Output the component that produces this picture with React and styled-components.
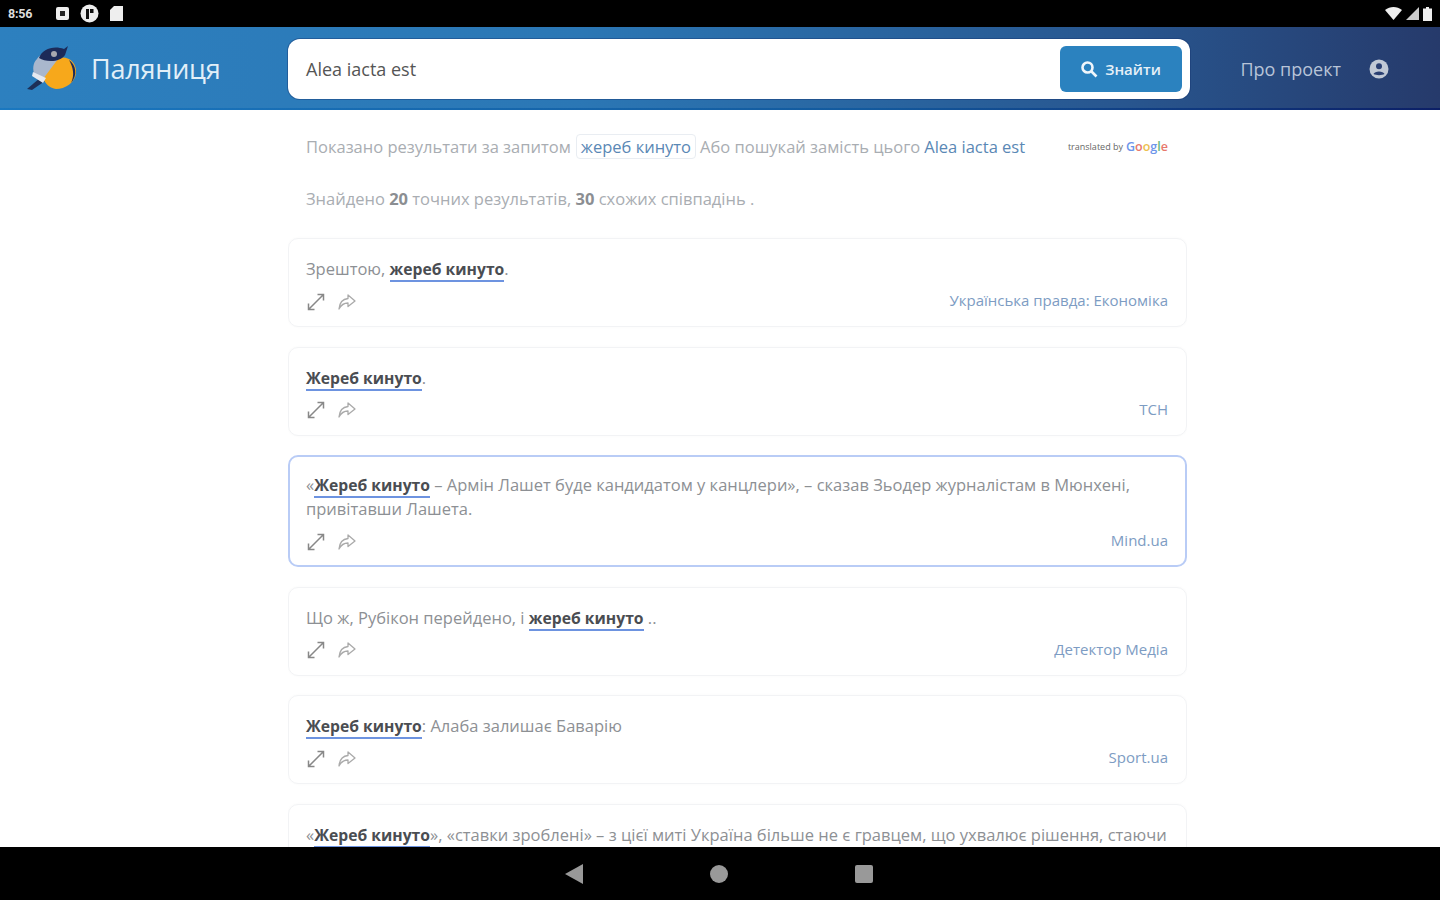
import React from "react";
import styled, { createGlobalStyle } from "styled-components";

const Global = createGlobalStyle`
  html, body { margin: 0; padding: 0; background: #fff; overflow: hidden; }
  body { font-family: "Open Sans", "Noto Sans", sans-serif; }
  * { box-sizing: border-box; }
`;

const Screen = styled.div`
  width: 1440px; height: 900px; display: flex; flex-direction: column; overflow: hidden; background: #fff;
`;
const StatusBar = styled.div`
  height: 27px; flex: none; background: #000; display: flex; align-items: center; justify-content: space-between;
  padding: 0 8px 0 8px; color: #e8e8e8;
`;
const StatusGroup = styled.div`
  display: flex; align-items: center; gap: ${p => p.$gap || 8}px;
`;
const Clock = styled.span`
  font: 700 12.5px "Roboto", sans-serif; width: 37px; color: #ddd; letter-spacing: -.2px;
`;
const Header = styled.header`
  height: 83px; flex: none; display: flex; align-items: center; padding: 3px 51px 0 26px;
  background: linear-gradient(90deg, #2d80bf 0%, #2b77b5 40%, #28568f 78%, #263a6b 100%);
  border-bottom: 2px solid;
  border-image: linear-gradient(90deg, #1a78c0 0%, #135a9e 60%, #0c1f66 100%) 1;
`;
const Brand = styled.div`
  width: 262px; display: flex; align-items: center; gap: 13px; padding-bottom: 2px;
`;
const BrandName = styled.span`
  font: 400 27px "Open Sans", sans-serif; color: #e2eff8; letter-spacing: -.2px;
`;
const SearchBox = styled.div`
  width: 902px; height: 60px; background: #fff; border-radius: 12px; display: flex; align-items: center;
  justify-content: space-between; padding: 0 8px 0 18px; box-shadow: 0 0 0 1px rgba(20,50,110,.4);
`;
const Query = styled.span`
  font-size: 18px; color: #555;
`;
const FindButton = styled.div`
  width: 122px; height: 46px; border-radius: 6px; background: #2b82bf; color: #e6f0f7; display: flex; align-items: center;
  justify-content: center; gap: 7px; font-size: 15px; font-weight: 600; padding-right: 1px;
`;
const HeaderNav = styled.nav`
  margin-left: auto; display: flex; align-items: center; gap: 28px; color: #b8c4d8; font-size: 18px;
`;
const Content = styled.main`
  flex: 1; min-height: 0; overflow: hidden; width: 899px; margin-left: 288px; display: flex; flex-direction: column;
`;
const Info = styled.div`
  height: 52px; flex: none; padding: 0 19px 0 18px; display: flex; align-items: center; font-size: 16.5px; color: #a9adb2; white-space: nowrap;
  ${p => p.$first && "margin-top: 10px;"}
  b { color: #8b8e92; font-weight: 700; }
`;
const QueryTag = styled.span`
  border: 1px solid #e9edf2; border-radius: 4px; color: #5a88b5; padding: 0 4px; margin: 0 4px 0 5px;
`;
const AltLink = styled.span`
  color: #5a88b5; margin-left: 4px;
`;
const Credit = styled.span`
  margin-left: auto; display: flex; align-items: center; gap: 3px; font-size: 9px; color: #666;
`;
const GoogleName = styled.span`
  font-size: 12.5px; font-weight: 600; span:nth-child(1),span:nth-child(4){color:#6d95ea} span:nth-child(2),span:nth-child(6){color:#e7786c} span:nth-child(3){color:#ecc04f} span:nth-child(5){color:#6cb97f}
`;
const Results = styled.div`
  margin-top: 14px; display: flex; flex-direction: column; gap: 19.5px;
`;
const Card = styled.article`
  border: ${p => p.$active ? "2px solid #b9ccf6" : "1px solid #f2f3f5"};
  border-radius: 10px; padding: ${p => p.$active ? "16px 17px 7px 16px" : "18px 18px 8px 17px"};
  box-shadow: ${p => p.$active ? "none" : "0 0 3px rgba(0,0,0,.03)"}; flex: none;
`;
const Sentence = styled.p`
  margin: 0; font-size: 16.5px; line-height: 24px; color: #8d9094; white-space: pre-line; height: ${p => p.$lines * 24}px;
  ${p => p.$clip && "white-space: nowrap; overflow: hidden;"}
`;
const Mark = styled.span`
  color: #4a4d52; font-size: 15.7px; font-weight: 700; border-bottom: 2px solid #6d93e0;
`;
const Foot = styled.div`
  display: flex; justify-content: space-between; align-items: center; height: 33px; margin-top: 4px;
`;
const Actions = styled.div`
  display: flex; gap: 11px; align-items: center; color: #888;
`;
const Source = styled.span`
  font-size: 15px; color: #7d9cc3; padding-bottom: 3px;
`;
const NavBar = styled.div`
  height: 53px; flex: none; background: #000; display: flex; align-items: center; justify-content: center; gap: 127px; padding-right: 2px;
`;

const Bird = () => (
  <svg width="52" height="46" viewBox="0 0 52 46">
    <path d="M1 44 L14 33 L19 36 L6 45 Z" fill="#1d2f57" />
    <path d="M30 14 C41 9 51 17 50 28 C49 38 39 44 30 44 C24 43 19 39 17 33 Z" fill="#f7a81b" />
    <path d="M11 14 C15 7 26 5 35 10 L17 34 L9 31 C6 24 7 18 11 14 Z" fill="#a9b7cd" />
    <path d="M13 13 C16 4 28 0 38 4 L42 1 L39 10 C36 14 31 16 25 16 C20 16 16 15 13 13 Z" fill="#1c2a59" />
    <path d="M7 27 L20 33 L17 38 L6 31 Z" fill="#e5e9f0" />
    <circle cx="28" cy="9" r="3" fill="#a8a8b0" />
    <path d="M43 15 C50 20 52 30 45 38 C49 30 47 22 43 15 Z" fill="#1c2a59" />
  </svg>
);
const ExpandIcon = () => (
  <svg width="20" height="20" viewBox="0 0 20 20" fill="none" stroke="currentColor" strokeWidth="1.5">
    <path d="M2.5 17.5 L17.5 2.5 M11.5 2.5 H17.5 V8.5 M2.5 11.5 V17.5 H8.5" />
  </svg>
);
const ShareIcon = () => (
  <svg width="20" height="20" viewBox="0 0 20 20" fill="none" stroke="#aaa" strokeWidth="1.3" strokeLinejoin="round">
    <path d="M11 3 L18 9 L11 14.5 V11 C7 11 4 13 2 17 C2.5 11 6 7 11 6.5 Z" />
  </svg>
);
const SearchIcon = () => (
  <svg width="18" height="18" viewBox="0 0 18 18" fill="none" stroke="#f0f6fb" strokeWidth="2.6">
    <circle cx="7.5" cy="7.5" r="5" /><path d="M11.5 11.5 L16.5 16.5" />
  </svg>
);
const UserIcon = () => (
  <svg width="20" height="20" viewBox="0 0 20 20">
    <circle cx="10" cy="10" r="9.5" fill="#c1c9d6" />
    <circle cx="10" cy="7.2" r="3" fill="#2a3f72" />
    <path d="M4.5 15 C5.5 11.5 14.5 11.5 15.5 15 C13 16.5 7 16.5 4.5 15 Z" fill="#2a3f72" />
  </svg>
);
const Wifi = () => <svg width="17" height="13" viewBox="0 0 17 13"><path d="M0 3 C5 -1 12 -1 17 3 L8.5 13 Z" fill="#eee" /></svg>;
const Signal = () => <svg width="13" height="13" viewBox="0 0 13 13"><path d="M13 0 V13 H0 Z" fill="#ccc" /></svg>;
const Battery = () => <svg width="9" height="14" viewBox="0 0 9 14"><path d="M3 0 H6 V1.5 H9 V14 H0 V1.5 H3 Z" fill="#eee" /></svg>;
const NoteIcon = () => <svg width="13" height="13" viewBox="0 0 13 13"><rect width="13" height="13" rx="2" fill="#eee" /><path d="M4 4 H9 V9 H4 Z" fill="#222" /></svg>;
const BadgeIcon = () => <svg width="19" height="19" viewBox="0 0 19 19"><circle cx="9.5" cy="9.5" r="9" fill="#eee" /><path d="M6 5 H9 V15 H6 Z M10 5 H13.5 V9 H10 Z" fill="#111" /></svg>;
const SdIcon = () => <svg width="13" height="15" viewBox="0 0 13 15"><path d="M4 0 H13 V15 H0 V4 Z" fill="#eee" /></svg>;

const results = [
  { pre: "Зрештою, ", mark: "жереб кинуто", post: ".", source: "Українська правда: Економіка" },
  { pre: "", mark: "Жереб кинуто", post: ".", source: "ТСН" },
  { pre: "«", mark: "Жереб кинуто", post: " – Армін Лашет буде кандидатом у канцлери», – сказав Зьодер журналістам в Мюнхені,\nпривітавши Лашета.", source: "Mind.ua", active: true, lines: 2 },
  { pre: "Що ж, Рубікон перейдено, і ", mark: "жереб кинуто", post: " ..", source: "Детектор Медіа" },
  { pre: "", mark: "Жереб кинуто", post: ": Алаба залишає Баварію", source: "Sport.ua" },
  { pre: "«", mark: "Жереб кинуто", post: "», «ставки зроблені» – з цієї миті Україна більше не є гравцем, що ухвалює рішення, стаючи", source: "", clip: true },
];

export default function App() {
  return (
    <Screen>
      <Global />
      <StatusBar>
        <StatusGroup $gap={11}><Clock>8:56</Clock><NoteIcon /><BadgeIcon /><SdIcon /></StatusGroup>
        <StatusGroup $gap={4}><Wifi /><Signal /><Battery /></StatusGroup>
      </StatusBar>
      <Header>
        <Brand><Bird /><BrandName>Паляниця</BrandName></Brand>
        <SearchBox>
          <Query>Alea iacta est</Query>
          <FindButton><SearchIcon />Знайти</FindButton>
        </SearchBox>
        <HeaderNav>Про проект<UserIcon /></HeaderNav>
      </Header>
      <Content>
        <Info $first>
          Показано результати за запитом<QueryTag>жереб кинуто</QueryTag>Або пошукай замість цього<AltLink>Alea iacta est</AltLink>
          <Credit>translated by <GoogleName><span>G</span><span>o</span><span>o</span><span>g</span><span>l</span><span>e</span></GoogleName></Credit>
        </Info>
        <Info>Знайдено&nbsp;<b>20</b>&nbsp;точних результатів,&nbsp;<b>30</b>&nbsp;схожих співпадінь .</Info>
        <Results>
          {results.map((r, i) => (
            <Card key={i} $active={r.active}>
              <Sentence $lines={r.lines || 1} $clip={r.clip}>{r.pre}<Mark>{r.mark}</Mark>{r.post}</Sentence>
              <Foot>
                <Actions><ExpandIcon /><ShareIcon /></Actions>
                <Source>{r.source}</Source>
              </Foot>
            </Card>
          ))}
        </Results>
      </Content>
      <NavBar>
        <svg width="18" height="22" viewBox="0 0 18 22"><path d="M18 1 V21 L0 11 Z" fill="#999" /></svg>
        <svg width="18" height="18" viewBox="0 0 18 18"><circle cx="9" cy="9" r="9" fill="#999" /></svg>
        <svg width="18" height="18" viewBox="0 0 18 18"><rect width="18" height="18" rx="2" fill="#999" /></svg>
      </NavBar>
    </Screen>
  );
}
